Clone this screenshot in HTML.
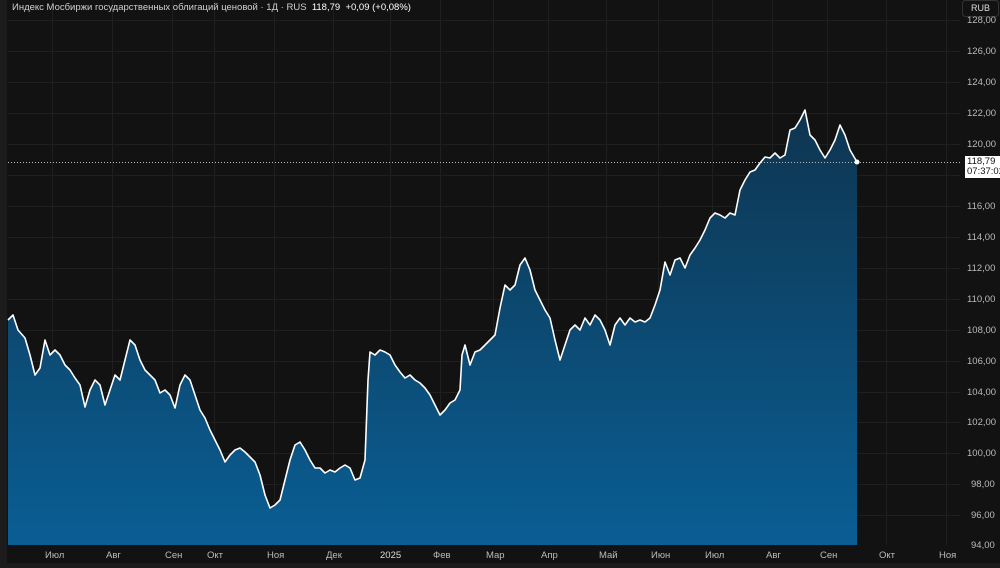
<!DOCTYPE html>
<html><head><meta charset="utf-8"><style>
html,body{margin:0;padding:0;background:#121212;width:1000px;height:568px;overflow:hidden;font-family:"Liberation Sans",sans-serif}
.t{position:absolute;color:#d8d8d8;font-size:10px;white-space:nowrap}
</style></head><body>
<svg width="1000" height="568" style="position:absolute;left:0;top:0">
<defs><linearGradient id="g" x1="0" y1="0" x2="0" y2="1" gradientUnits="userSpaceOnUse" x1b="0">
</linearGradient>
<linearGradient id="f" x1="0" y1="110" x2="0" y2="545" gradientUnits="userSpaceOnUse"><stop offset="0" stop-color="#0e3550"/><stop offset="1" stop-color="#0a5e94"/></linearGradient></defs>
<rect x="0" y="0" width="1000" height="568" fill="#121212"/>
<rect x="0" y="0" width="7" height="568" fill="#1c1c1c"/>
<rect x="0" y="563" width="1000" height="5" fill="#1c1c1c"/>
<g stroke="#1f1f1f" stroke-width="1">
<line x1="8" y1="20.5" x2="960" y2="20.5"/><line x1="8" y1="51.5" x2="960" y2="51.5"/><line x1="8" y1="82.5" x2="960" y2="82.5"/><line x1="8" y1="113.5" x2="960" y2="113.5"/><line x1="8" y1="144.5" x2="960" y2="144.5"/><line x1="8" y1="175.5" x2="960" y2="175.5"/><line x1="8" y1="206.5" x2="960" y2="206.5"/><line x1="8" y1="237.5" x2="960" y2="237.5"/><line x1="8" y1="268.5" x2="960" y2="268.5"/><line x1="8" y1="299.5" x2="960" y2="299.5"/><line x1="8" y1="330.5" x2="960" y2="330.5"/><line x1="8" y1="361.5" x2="960" y2="361.5"/><line x1="8" y1="392.5" x2="960" y2="392.5"/><line x1="8" y1="422.5" x2="960" y2="422.5"/><line x1="8" y1="453.5" x2="960" y2="453.5"/><line x1="8" y1="484.5" x2="960" y2="484.5"/><line x1="8" y1="515.5" x2="960" y2="515.5"/>
<line x1="52.5" y1="0" x2="52.5" y2="545"/><line x1="112.5" y1="0" x2="112.5" y2="545"/><line x1="172.5" y1="0" x2="172.5" y2="545"/><line x1="214.5" y1="0" x2="214.5" y2="545"/><line x1="274.5" y1="0" x2="274.5" y2="545"/><line x1="333.5" y1="0" x2="333.5" y2="545"/><line x1="390.5" y1="0" x2="390.5" y2="545"/><line x1="440.5" y1="0" x2="440.5" y2="545"/><line x1="493.5" y1="0" x2="493.5" y2="545"/><line x1="548.5" y1="0" x2="548.5" y2="545"/><line x1="606.5" y1="0" x2="606.5" y2="545"/><line x1="658.5" y1="0" x2="658.5" y2="545"/><line x1="712.5" y1="0" x2="712.5" y2="545"/><line x1="772.5" y1="0" x2="772.5" y2="545"/><line x1="827.5" y1="0" x2="827.5" y2="545"/><line x1="886.5" y1="0" x2="886.5" y2="545"/><line x1="946.5" y1="0" x2="946.5" y2="545"/>
</g>
<path id="p" d="M8,320L13,315L18,330L25,338L30,355L35,375L40,368L45,340L50,355L55,350L60,355L65,365L70,370L75,378L80,385L85,407L90,390L95,380L100,385L105,405L110,390L115,375L120,380L125,360L130,340L135,345L140,360L145,370L150,375L155,380L160,393L165,390L170,395L175,408L180,385L185,375L190,380L195,395L200,410L205,418L210,430L215,440L220,450L225,462L230,455L235,450L240,448L245,452L250,457L255,462L260,475L265,495L270,508L275,505L280,500L285,480L290,460L295,445L300,442L305,450L310,460L315,468L320,468L325,473L330,470L335,472L340,468L345,465L350,468L355,480L360,478L365,460L368,380L370,352L375,355L380,350L385,352L390,355L395,365L400,372L405,378L410,375L415,380L420,383L425,388L430,395L435,405L440,415L445,410L450,403L455,400L460,390L462,355L465,345L470,365L475,352L480,350L485,345L490,340L495,335L500,308L505,285L510,290L515,285L520,265L525,258L530,270L535,290L540,300L545,310L550,318L555,340L560,360L565,345L570,330L575,325L580,330L585,318L590,325L595,315L600,320L605,330L610,345L615,325L620,318L625,325L630,318L635,322L640,320L645,322L650,318L655,305L660,290L665,262L670,275L675,260L680,258L685,268L690,255L695,248L700,240L705,230L710,218L715,213L720,215L725,218L730,213L735,215L740,190L745,180L750,172L755,170L760,163L765,157L770,158L775,153L780,158L785,155L790,130L795,128L800,120L805,110L810,135L815,140L820,150L825,158L830,150L835,140L840,125L845,135L850,150L857,162" fill="none"/>
<path d="M8,320L13,315L18,330L25,338L30,355L35,375L40,368L45,340L50,355L55,350L60,355L65,365L70,370L75,378L80,385L85,407L90,390L95,380L100,385L105,405L110,390L115,375L120,380L125,360L130,340L135,345L140,360L145,370L150,375L155,380L160,393L165,390L170,395L175,408L180,385L185,375L190,380L195,395L200,410L205,418L210,430L215,440L220,450L225,462L230,455L235,450L240,448L245,452L250,457L255,462L260,475L265,495L270,508L275,505L280,500L285,480L290,460L295,445L300,442L305,450L310,460L315,468L320,468L325,473L330,470L335,472L340,468L345,465L350,468L355,480L360,478L365,460L368,380L370,352L375,355L380,350L385,352L390,355L395,365L400,372L405,378L410,375L415,380L420,383L425,388L430,395L435,405L440,415L445,410L450,403L455,400L460,390L462,355L465,345L470,365L475,352L480,350L485,345L490,340L495,335L500,308L505,285L510,290L515,285L520,265L525,258L530,270L535,290L540,300L545,310L550,318L555,340L560,360L565,345L570,330L575,325L580,330L585,318L590,325L595,315L600,320L605,330L610,345L615,325L620,318L625,325L630,318L635,322L640,320L645,322L650,318L655,305L660,290L665,262L670,275L675,260L680,258L685,268L690,255L695,248L700,240L705,230L710,218L715,213L720,215L725,218L730,213L735,215L740,190L745,180L750,172L755,170L760,163L765,157L770,158L775,153L780,158L785,155L790,130L795,128L800,120L805,110L810,135L815,140L820,150L825,158L830,150L835,140L840,125L845,135L850,150L857,162L857,545L8,545Z" fill="url(#f)"/>
<line x1="8" y1="162.5" x2="962" y2="162.5" stroke="#bbb" stroke-width="1" stroke-dasharray="1,2"/>
<use href="#p" stroke="#fff" stroke-width="1.6" stroke-linejoin="round"/>
<circle cx="857" cy="162" r="2.5" fill="#fff"/>
<rect x="962.5" y="0.5" width="36" height="16" rx="3" fill="#121212" stroke="#333"/>
<rect x="965" y="156" width="35" height="22" fill="#fff"/>
</svg>
<div class="t" style="left:12px;top:2px;font-size:9.5px;color:#cfcfcf">Индекс Мосбиржи государственных облигаций ценовой · 1Д · RUS&nbsp; <span style="color:#fff">118,79&nbsp; +0,09 (+0,08%)</span></div>
<div class="t" style="left:971px;top:3px;font-size:9px;color:#ddd">RUB</div>
<div class="t" style="left:967px;top:157px;font-size:9.5px;color:#111;line-height:10px">118,79<br>07:37:02</div>
<div style="position:absolute;left:967px;top:0;font-size:9.5px;color:#bbb">
<div style="position:absolute;top:15px">128,00</div><div style="position:absolute;top:46px">126,00</div><div style="position:absolute;top:77px">124,00</div><div style="position:absolute;top:108px">122,00</div><div style="position:absolute;top:139px">120,00</div><div style="position:absolute;top:201px">116,00</div><div style="position:absolute;top:232px">114,00</div><div style="position:absolute;top:263px">112,00</div><div style="position:absolute;top:294px">110,00</div><div style="position:absolute;top:325px">108,00</div><div style="position:absolute;top:356px">106,00</div><div style="position:absolute;top:387px">104,00</div><div style="position:absolute;top:417px">102,00</div><div style="position:absolute;top:448px">100,00</div><div style="position:absolute;top:479px;left:4px">98,00</div><div style="position:absolute;top:510px;left:4px">96,00</div><div style="position:absolute;top:540px;left:4px">94,00</div>
</div>
<div style="position:absolute;top:550px;left:0;font-size:9.5px;color:#bbb">
<span style="position:absolute;left:45px">Июл</span><span style="position:absolute;left:106px">Авг</span><span style="position:absolute;left:165px">Сен</span><span style="position:absolute;left:207px">Окт</span><span style="position:absolute;left:267px">Ноя</span><span style="position:absolute;left:326px">Дек</span><span style="position:absolute;left:380px;color:#ddd">2025</span><span style="position:absolute;left:433px">Фев</span><span style="position:absolute;left:486px">Мар</span><span style="position:absolute;left:541px">Апр</span><span style="position:absolute;left:599px">Май</span><span style="position:absolute;left:651px">Июн</span><span style="position:absolute;left:705px">Июл</span><span style="position:absolute;left:766px">Авг</span><span style="position:absolute;left:820px">Сен</span><span style="position:absolute;left:879px">Окт</span><span style="position:absolute;left:939px">Ноя</span>
</div>
</body></html>
